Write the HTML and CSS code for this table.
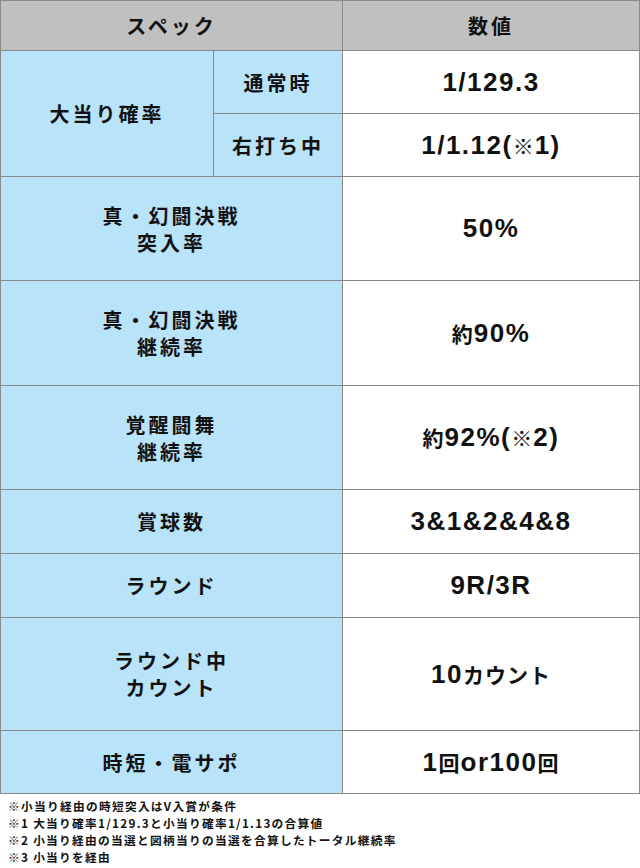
FILE: index.html
```html
<!DOCTYPE html>
<html lang="ja">
<head>
<meta charset="utf-8">
<link rel="stylesheet" href="styles.css">
</head>
<body>
<div class="spec">
  <div class="cell head span2 r1">スペック</div>
  <div class="cell head val-head r1">数値</div>

  <div class="cell label big r2">大当り確率</div>
  <div class="cell label sub">通常時</div>
  <div class="cell val">1/129.3</div>
  <div class="cell label sub">右打ち中</div>
  <div class="cell val">1/1.12(<span class="jp">※</span>1)</div>

  <div class="cell label span2">真・幻闘決戦<br>突入率</div>
  <div class="cell val">50%</div>

  <div class="cell label span2">真・幻闘決戦<br>継続率</div>
  <div class="cell val"><span class="jp">約</span>90%</div>

  <div class="cell label span2">覚醒闘舞<br>継続率</div>
  <div class="cell val"><span class="jp">約</span>92%(<span class="jp">※</span>2)</div>

  <div class="cell label span2">賞球数</div>
  <div class="cell val">3&amp;1&amp;2&amp;4&amp;8</div>

  <div class="cell label span2">ラウンド</div>
  <div class="cell val">9R/3R</div>

  <div class="cell label span2">ラウンド中<br>カウント</div>
  <div class="cell val">10<span class="jp">カウント</span></div>

  <div class="cell label span2">時短・電サポ</div>
  <div class="cell val">1<span class="jp">回</span>or100<span class="jp">回</span></div>
</div>
<div class="notes">
  <p>※小当り経由の時短突入はV入賞が条件</p>
  <p>※1 大当り確率1/129.3と小当り確率1/1.13の合算値</p>
  <p>※2 小当り経由の当選と図柄当りの当選を合算したトータル継続率</p>
  <p>※3 小当りを経由</p>
</div>
</body>
</html>
```

FILE: styles.css
```css
html, body {
  margin: 0;
  padding: 0;
  background: #ffffff;
}
body {
  width: 640px;
  font-family: "Noto Sans CJK JP", "Noto Sans", sans-serif;
  color: #111111;
}
.spec {
  display: grid;
  grid-template-columns: 212px 128px 296px;
  grid-template-rows: 49px 62px 62px 103px 104px 103px 63px 63px 112px 62px;
  gap: 1px;
  background: #8a8a8a;
  border: 1px solid #8a8a8a;
  width: 638px;
}
.cell {
  display: flex;
  align-items: center;
  justify-content: center;
  text-align: center;
  font-weight: 700;
  font-size: 20px;
  line-height: 27px;
  letter-spacing: 3px;
}
.head {
  background: #c0c0c0;
}
.span2 {
  grid-column: span 2;
}
.r2 {
  grid-row: span 2;
}
.label {
  background: #b9e3f8;
}
.val {
  background: #ffffff;
  font-family: "Liberation Sans", "Noto Sans CJK JP", sans-serif;
  font-size: 26px;
  letter-spacing: 1.5px;
}
.jp {
  font-family: "Noto Sans CJK JP", sans-serif;
  font-size: 21px;
  letter-spacing: 1px;
}
.notes {
  padding: 3px 0 0 8px;
  font-size: 11.7px;
  font-weight: 700;
  line-height: 17px;
  letter-spacing: 1.3px;
  color: #111111;
}
.notes p {
  margin: 0;
  height: 17px;
  white-space: nowrap;
}
```
